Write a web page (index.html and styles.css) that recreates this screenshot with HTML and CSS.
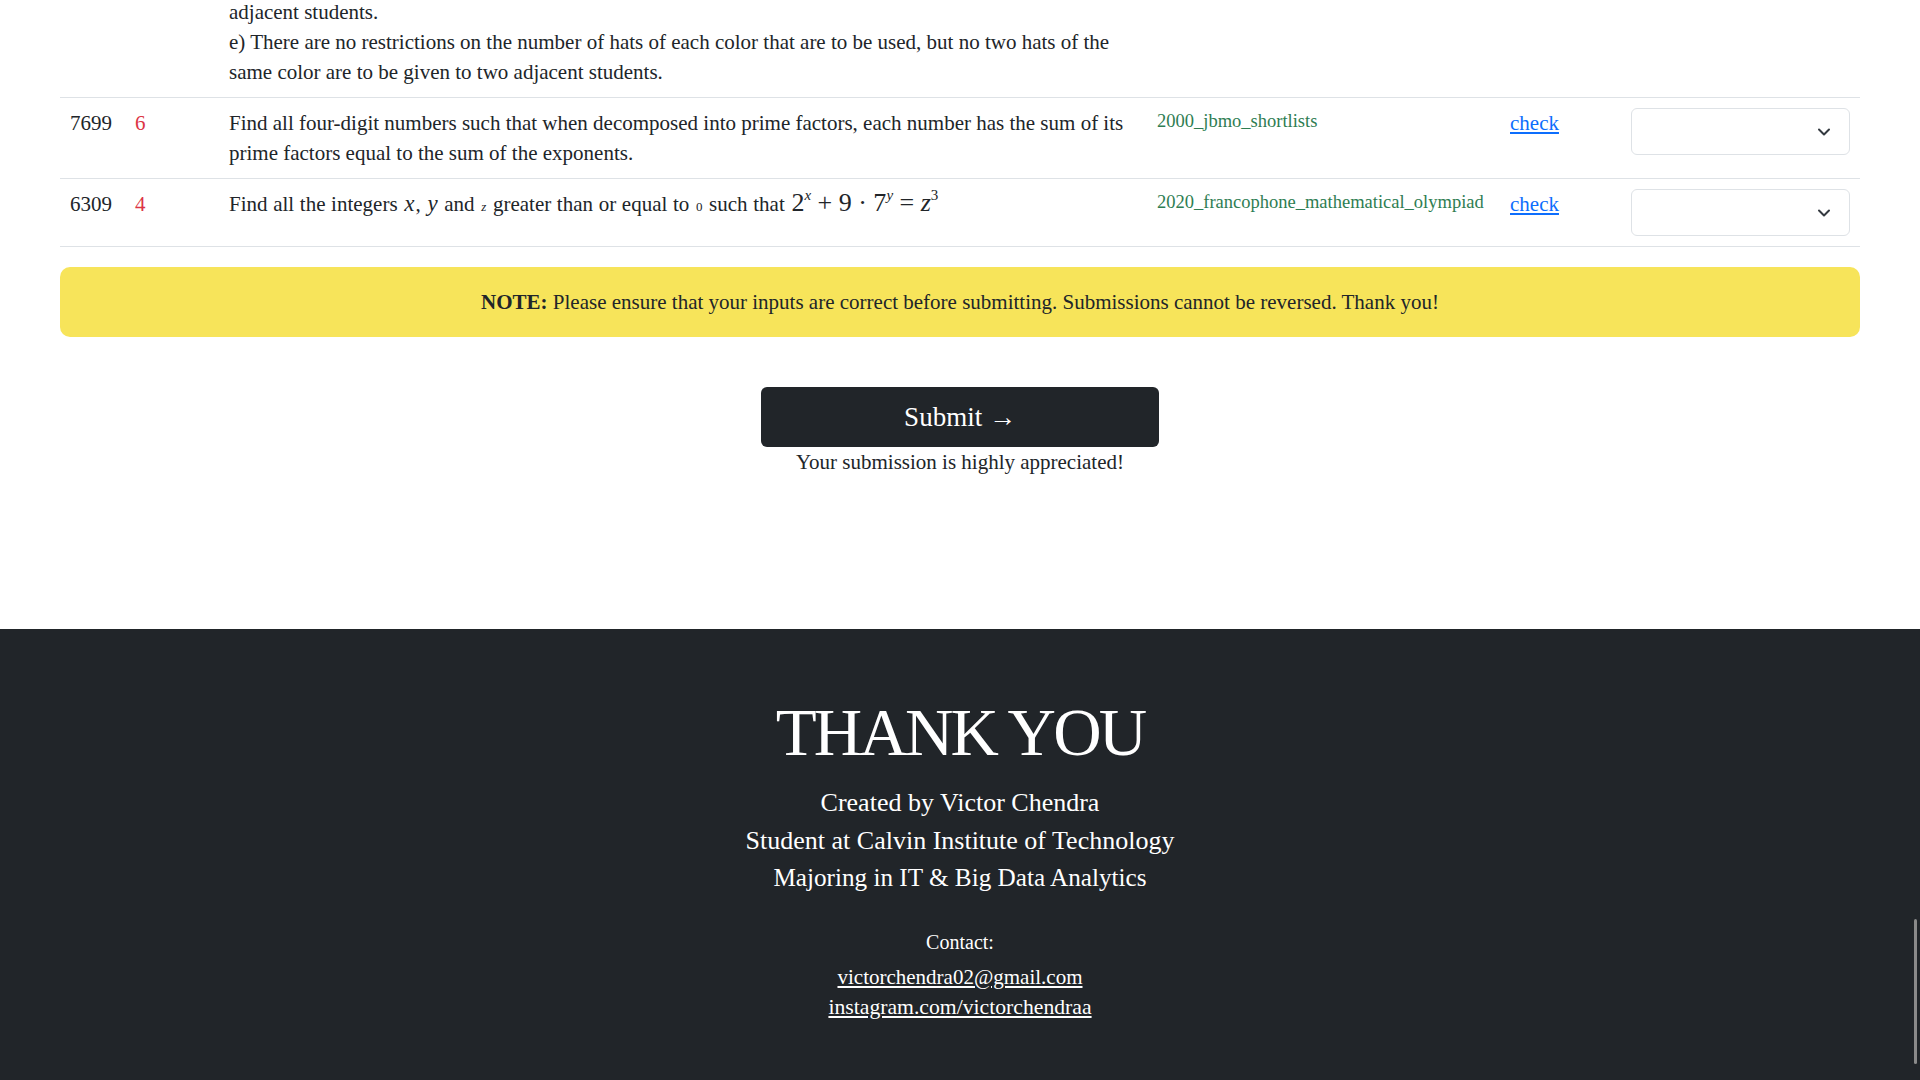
FILE: index.html
```html
<!DOCTYPE html>
<html lang="en">
<head>
<meta charset="utf-8">
<title>Problem Review</title>
<link rel="stylesheet" href="styles.css">
</head>
<body>
<main class="content">
  <table class="problems">
    <colgroup>
      <col class="c-id"><col class="c-diff"><col class="c-prob"><col class="c-src"><col class="c-check"><col class="c-sel">
    </colgroup>
    <tbody>
      <tr class="partial">
        <td></td><td></td>
        <td class="prob">adjacent students.<br>e) There are no restrictions on the number of hats of each color that are to be used, but no two hats of the same color are to be given to two adjacent students.</td>
        <td></td><td></td><td></td>
      </tr>
      <tr>
        <td class="id">7699</td>
        <td class="diff">6</td>
        <td class="prob">Find all four-digit numbers such that when decomposed into prime factors, each number has the sum of its prime factors equal to the sum of the exponents.</td>
        <td class="src">2000_jbmo_shortlists</td>
        <td><a class="check" href="#">check</a></td>
        <td><div class="select-box"><svg class="chev" width="14" height="10" viewBox="0 0 14 10"><path d="M2 2.5l5 5 5-5" fill="none" stroke="#343a40" stroke-width="2" stroke-linecap="round" stroke-linejoin="round"/></svg></div></td>
      </tr>
      <tr>
        <td class="id">6309</td>
        <td class="diff">4</td>
        <td class="prob math-row">Find all the integers <i class="mv">x</i>, <i class="mv">y</i> and <i class="tiny">z</i> greater than or equal to <span class="tiny">0</span> such that <span class="formula">2<sup><i>x</i></sup> + 9 · 7<sup><i>y</i></sup> = <i>z</i><sup>3</sup></span></td>
        <td class="src">2020_francophone_mathematical_olympiad</td>
        <td><a class="check" href="#">check</a></td>
        <td><div class="select-box"><svg class="chev" width="14" height="10" viewBox="0 0 14 10"><path d="M2 2.5l5 5 5-5" fill="none" stroke="#343a40" stroke-width="2" stroke-linecap="round" stroke-linejoin="round"/></svg></div></td>
      </tr>
    </tbody>
  </table>

  <div class="note"><b>NOTE:</b> Please ensure that your inputs are correct before submitting. Submissions cannot be reversed. Thank you!</div>

  <div class="submit-area">
    <button class="submit-btn" type="button">Submit →</button>
    <p class="submit-note">Your submission is highly appreciated!</p>
  </div>
</main>

<footer class="footer">
  <h2 class="thanks">THANK YOU</h2>
  <div class="credits">
    <p>Created by Victor Chendra</p>
    <p>Student at Calvin Institute of Technology</p>
    <p class="major">Majoring in IT &amp; Big Data Analytics</p>
  </div>
  <div class="contact">
    <p class="contact-label">Contact:</p>
    <a href="#">victorchendra02@gmail.com</a>
    <a href="#" class="ig">instagram.com/victorchendraa</a>
  </div>
</footer>
<div class="scroll-thumb"></div>
</body>
</html>
```

FILE: styles.css
```css
html, body {
  margin: 0;
  height: 100%;
  overflow: hidden;
}
body {
  font-family: "Liberation Serif", "Times New Roman", serif;
  font-size: 21px;
  line-height: 30px;
  color: #212529;
  background: #fff;
  display: flex;
  flex-direction: column;
}
.content {
  padding: 0 60px;
  height: 629px;
  box-sizing: border-box;
  flex: none;
}
.problems {
  width: 100%;
  border-collapse: collapse;
  table-layout: fixed;
  margin-top: -3px;
}
.c-id { width: 65px; }
.c-diff { width: 94px; }
.c-prob { width: 928px; }
.c-src { width: 353px; }
.c-check { width: 121px; }
.c-sel { width: 239px; }
.problems td {
  padding: 10px;
  vertical-align: top;
  border-bottom: 1px solid #dee2e6;
}
.problems .partial td {
  padding-top: 0;
}
.diff {
  color: #dc3545;
}
.src {
  color: #2e7d52;
  font-size: 18.5px;
  line-height: 27px;
}
.check {
  color: #0d6efd;
  text-decoration: underline;
}
.select-box {
  height: 47px;
  box-sizing: border-box;
  border: 1px solid #dee2e6;
  border-radius: 6px;
  display: flex;
  align-items: center;
  justify-content: flex-end;
  padding-right: 18px;
}
.math-row {
  word-spacing: 0.4px;
}
.mv {
  font-style: italic;
  font-size: 23px;
  padding: 0 1px;
}
.tiny {
  font-size: 13px;
  padding: 0 1px;
}
.formula {
  font-size: 26px;
  line-height: 1;
  word-spacing: 0;
  margin-left: 1px;
}
.formula sup {
  font-size: 15px;
  vertical-align: 11px;
  line-height: 0;
}
.note {
  margin-top: 20px;
  background: #f7e45a;
  border-radius: 10px;
  padding: 20px;
  text-align: center;
}
.submit-area {
  margin-top: 50px;
  display: flex;
  flex-direction: column;
  align-items: center;
}
.submit-btn {
  width: 398px;
  height: 60px;
  background: #212529;
  color: #fff;
  border: none;
  border-radius: 6px;
  font-family: "Liberation Serif", "Times New Roman", serif;
  font-size: 27px;
}
.submit-note {
  margin: 0;
}
.footer {
  flex: 1;
  background: #212529;
  color: #fff;
  text-align: center;
  padding-top: 62px;
}
.thanks {
  margin: 0 0 11px;
  font-size: 67px;
  font-weight: 400;
  line-height: 82px;
  letter-spacing: -2.8px;
}
.credits p {
  margin: 0;
  font-size: 26px;
  line-height: 37.5px;
}
.credits p.major {
  font-size: 25.2px;
}
.contact {
  margin-top: 30px;
  font-size: 20px;
  line-height: 30px;
  display: flex;
  flex-direction: column;
  align-items: center;
}
.contact-label {
  margin: 0 0 5px;
}
.contact a {
  color: #fff;
  text-decoration: underline;
  font-size: 21px;
}
.contact a.ig {
  font-size: 21.7px;
}
.scroll-thumb {
  position: fixed;
  right: 3px;
  top: 919px;
  width: 3px;
  height: 145px;
  background: #8a8a8a;
  border-radius: 2px;
}
```
